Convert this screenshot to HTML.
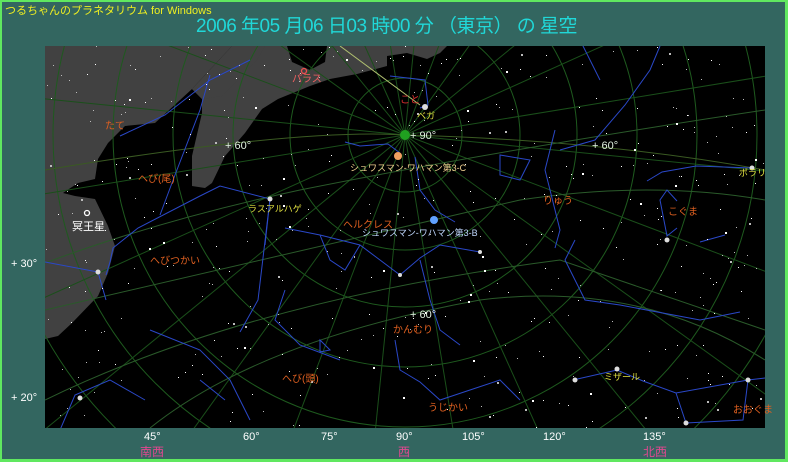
<!DOCTYPE html>
<html><head><meta charset="utf-8"><style>
html,body{margin:0;padding:0;width:788px;height:462px;overflow:hidden}
body{background:#60e860;position:relative;font-family:"Liberation Sans","Noto Sans CJK JP",sans-serif}
#bg{position:absolute;left:2px;top:2px;width:783px;height:457px;background:#336660}
.t{position:absolute;white-space:nowrap}
</style></head><body>
<div id="bg"></div>
<div class="t" style="left:5px;top:2px;font-size:11px;color:#f0f020">つるちゃんのプラネタリウム for Windows</div>
<div class="t" style="left:196px;top:11px;font-size:19px;color:#20d8d8;letter-spacing:-0.5px">2006 年05 月06 日03 時00 分 （東京） の 星空</div>
<svg width="788" height="462" style="position:absolute;left:0;top:0" font-family="Liberation Sans, Noto Sans CJK JP, sans-serif">
<defs><clipPath id="c"><rect x="45" y="46" width="720" height="382"/></clipPath></defs>
<rect x="45" y="46" width="720" height="382" fill="#000"/>
<g clip-path="url(#c)">
<path fill="#414141" d="M45,46 L232,46 L218,66 L192,89 L202,99 L202,113 L192,156 L192,186 L205,188 L212,183 L225,156 L245,133 L262,109 L278,99 L310,86 L330,79 L357,74 L387,66 L387,56 L407,53 L427,59 L440,53 L447,46 L232,46 L192,89 L155,123 L125,126 L108,143 L98,159 L95,179 L78,183 L63,193 L75,196 L95,199 L108,226 L115,246 L108,273 L98,296 L72,323 L58,336 L45,339 Z"/>
<path fill="#414141" d="M232,46 L265,46 L257,60 L222,96 L202,99 L192,89 Z"/>
<path fill="#000" d="M287,46 L327,46 L325,62 L310,70 L292,62 Z"/>
<g fill="none" stroke="#1e5a1e" stroke-width="1">
<circle cx="405" cy="135" r="57"/><circle cx="405" cy="135" r="115"/><circle cx="405" cy="135" r="172"/><circle cx="405" cy="135" r="232"/><circle cx="405" cy="135" r="292"/><circle cx="405" cy="135" r="352"/><circle cx="405" cy="135" r="412"/>
</g>
<g id="rad" stroke="#1a4f1a" stroke-width="1"></g>
<g fill="none" stroke="#3a5a22" stroke-width="1">
<path d="M45,170 Q300,128 405,135 Q600,140 765,170"/>
<path d="M45,263 Q160,220 300,190 Q500,150 765,110" stroke="#2a5a2a"/>
<path d="M45,310 Q300,250 520,200 Q650,180 765,200" stroke="#2a5a2a"/>
<path d="M45,400 Q250,300 560,260 L765,330" stroke="#2a5a2a"/>
<path d="M150,428 Q260,340 480,300 Q640,280 765,360" stroke="#2a5a2a"/>
<path d="M340,46 L420,105" stroke="#b0c070"/>
</g>
<g fill="none" stroke="#2a48c8" stroke-width="1">
<path d="M120,136 L165,115 L210,80 L250,60"/>
<path d="M106,275 L110,262 L113,248 L138,228 L200,196 L220,186 L270,199 L258,300 L240,332"/>
<path d="M45,262 L98,272 L106,300"/>
<path d="M160,215 L175,175 L200,110 L210,75"/>
<path d="M270,199 L265,245"/>
<path d="M285,228 L320,235 L360,245 L380,260 L400,275 L420,258 L440,245 L480,252"/>
<path d="M320,235 L330,260 L345,270 L360,245"/>
<path d="M345,142 L360,146 L388,144 L400,153"/>
<path d="M415,157 L420,190 L435,210 L455,222"/>
<path d="M500,155 L530,160 L520,180 L500,175 Z"/>
<path d="M560,150 L595,140 L625,105 L650,70 L660,46"/>
<path d="M575,240 L565,260 L585,300 L620,305 L700,320 L740,312"/>
<path d="M700,242 L725,235"/>
<path d="M647,181 L662,172 L696,166 L752,168"/>
<path d="M677,228 L667,236 L660,200 L667,190 L677,201"/>
<path d="M573,380 L617,370 L643,381 L676,393 L748,380 L765,378"/>
<path d="M676,393 L686,423 L743,420 L748,380"/>
<path d="M555,130 L545,170 L560,230 L555,248"/>
<path d="M580,40 L600,80"/>
<path d="M395,340 L400,370 L420,382 L440,400 L470,390 L500,380 L520,400"/>
<path d="M320,340 L330,350 L320,352 Z"/>
<path d="M150,330 L200,350 L230,380 L250,420"/>
<path d="M60,430 L75,395 L110,380 L145,400"/>
<path d="M200,380 L225,400"/>
<path d="M285,290 L275,320 L300,345 L340,360"/>
<path d="M390,76 L425,80 L428,105 L420,108"/>
<path d="M420,260 L430,300 L440,330 L460,345"/>
</g>
<g id="stars" fill="#fff"></g>
<g fill="#ddd">
<circle cx="98" cy="272" r="2.5"/><circle cx="270" cy="199" r="2.5"/><circle cx="425" cy="107" r="3"/><circle cx="752" cy="168" r="2.5"/><circle cx="667" cy="240" r="2.5"/><circle cx="617" cy="369" r="2.5"/><circle cx="748" cy="380" r="2.5"/><circle cx="686" cy="423" r="2.5"/><circle cx="575" cy="380" r="2.5"/><circle cx="80" cy="398" r="2.5"/><circle cx="480" cy="252" r="2"/><circle cx="400" cy="275" r="2"/>
</g>
<circle cx="405" cy="135" r="5" fill="#20a020"/>
<circle cx="398" cy="156" r="4" fill="#f0a060"/>
<circle cx="434" cy="220" r="4" fill="#60a0ff"/>
<circle cx="304" cy="71" r="2.5" fill="none" stroke="#f05050" stroke-width="1.3"/>
<circle cx="87" cy="213" r="2.5" fill="none" stroke="#fff" stroke-width="1.3"/>
</g>
<g font-size="10" fill="#e06020">
<text x="105" y="129">たて</text>
<text x="138" y="182">へび(尾)</text>
<text x="150" y="264">へびつかい</text>
<text x="343" y="228">ヘルクレス</text>
<text x="543" y="204">りゅう</text>
<text x="668" y="215">こぐま</text>
<text x="393" y="333">かんむり</text>
<text x="282" y="382">へび(頭)</text>
<text x="428" y="411">うじかい</text>
<text x="733" y="413">おおぐま</text>
<text x="400" y="103" fill="#e03030">こと</text>
<text x="292" y="82" fill="#f06060">パラス</text>
</g>
<g font-size="9" fill="#e0e040">
<text x="248" y="212">ラスアルハゲ</text>
<text x="417" y="119">ベガ</text>
<text x="739" y="176">ポラリ</text>
<text x="604" y="380">ミザール</text>
</g>
<g font-size="9" fill="#f0d090"><text x="350" y="171">シュワスマン-ワハマン第3-C</text></g>
<g font-size="9" fill="#c0d8ff"><text x="362" y="236">シュワスマン-ワハマン第3-B</text></g>
<text x="72" y="230" font-size="11" fill="#fff">冥王星</text>
<g font-size="11" fill="#e0f0e0">
<text x="225" y="149">+ 60°</text>
<text x="410" y="139">+ 90°</text>
<text x="592" y="149">+ 60°</text>
<text x="410" y="318">+ 60°</text>
</g>
<g font-size="11" fill="#fff">
<text x="11" y="267">+ 30°</text>
<text x="11" y="401">+ 20°</text>
<text x="144" y="440">45°</text>
<text x="243" y="440">60°</text>
<text x="321" y="440">75°</text>
<text x="396" y="440">90°</text>
<text x="462" y="440">105°</text>
<text x="543" y="440">120°</text>
<text x="643" y="440">135°</text>
</g>
<g font-size="12" fill="#e04890">
<text x="140" y="456">南西</text>
<text x="398" y="456">西</text>
<text x="643" y="456">北西</text>
</g>
</svg>
<script>
(function(){
var ns="http://www.w3.org/2000/svg";
var r=document.getElementById("rad");
for(var i=0;i<24;i++){var a=i*Math.PI/12+0.1;var l=document.createElementNS(ns,"line");
l.setAttribute("x1",405);l.setAttribute("y1",135);l.setAttribute("x2",405+700*Math.cos(a));l.setAttribute("y2",135+700*Math.sin(a));r.appendChild(l);}
var s=document.getElementById("stars");var seed=12345;
function rnd(){seed=(seed*16807)%2147483647;return seed/2147483647;}
for(var i=0;i<450;i++){var c=document.createElementNS(ns,"rect");
c.setAttribute("x",(45+rnd()*720).toFixed(0));c.setAttribute("y",(46+rnd()*381).toFixed(0));
var z=rnd()<0.12?2:1;c.setAttribute("width",z);c.setAttribute("height",z);
c.setAttribute("fill",rnd()<0.5?"#fff":"#bbb");s.appendChild(c);}
})();
</script>
</body></html>
